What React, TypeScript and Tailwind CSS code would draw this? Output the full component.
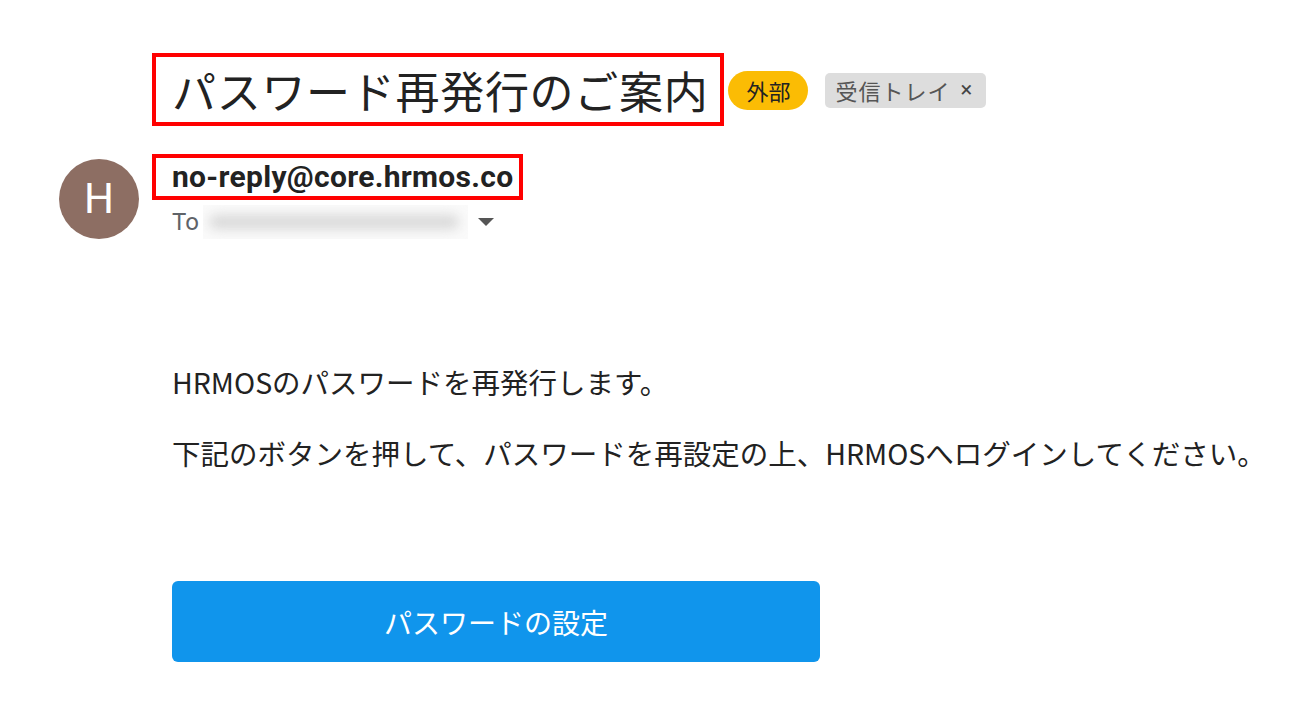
import React from "react";

export default function App() {
  const jp = { fontFamily: '"Noto Sans CJK JP", "Noto Sans", sans-serif' };
  const ro = { fontFamily: 'Roboto, "Noto Sans CJK JP", sans-serif' };
  return (
    <div className="w-[1316px] h-[720px] bg-white overflow-hidden relative">
      {/* Title row */}
      <div className="flex items-center pl-[152px] pt-[53px]">
        <div className="h-[73px] border-4 border-[#ff0000] flex items-center pl-[16px] pr-[12px]">
          <span className="text-[44px] leading-none text-[#222] tracking-[0.7px]" style={jp}>
            パスワード再発行のご案内
          </span>
        </div>
        <div className="ml-[4px] h-[39px] w-[80px] rounded-full bg-[#fbbc04] flex items-center justify-center mt-[1px]">
          <span className="text-[22px] leading-none text-[#222]" style={jp}>外部</span>
        </div>
        <div className="ml-[17px] h-[35px] rounded-[5px] bg-[#dddddd] flex items-center pl-[10px] pr-[14px] mt-[1px]">
          <span className="text-[22px] leading-none text-[#555] tracking-[1px]" style={jp}>受信トレイ</span>
          <span className="ml-[10px] text-[22px] leading-none text-[#444]" style={ro}>×</span>
        </div>
      </div>

      {/* Sender */}
      <div className="flex pl-[59px] mt-[28px]">
        <div className="w-[80px] h-[80px] rounded-full bg-[#8d6e63] flex items-center justify-center mt-[5px]">
          <span className="text-white text-[42px] leading-none" style={ro}>H</span>
        </div>
        <div className="ml-[13px] flex flex-col">
          <div className="h-[46px] border-4 border-[#ff0000] flex items-center pl-[16px] pr-[6px] self-start">
            <span className="text-[30px] font-bold text-[#222] leading-none tracking-[0.3px]" style={ro}>no-reply@core.hrmos.co</span>
          </div>
          <div className="flex items-center pl-[20px] h-[36px] mt-[4px]">
            <span className="text-[24px] text-[#5f6368] leading-none" style={ro}>To</span>
            <div className="ml-[4px] w-[265px] h-[34px] relative overflow-hidden bg-[#fafafa]">
              <div className="absolute left-[6px] top-[10px] w-[250px] h-[14px] rounded-full bg-[#d8d8d8] blur-[6px]" />
            </div>
            <svg className="ml-[10px]" width="16" height="9" viewBox="0 0 16 9">
              <path d="M0 0 H16 L8 8 Z" fill="#555" />
            </svg>
          </div>
        </div>
      </div>

      {/* Body */}
      <div className="pl-[172px] mt-[124px] text-[#222]" style={jp}>
        <p className="text-[28.5px] leading-[36px]">HRMOSのパスワードを再発行します。</p>
        <p className="text-[28.5px] leading-[36px] mt-[35px]">
          下記のボタンを押して、パスワードを再設定の上、HRMOSへログインしてください。
        </p>
        <div className="mt-[110px] w-[648px] h-[81px] rounded-[6px] bg-[#1095ec] flex items-center justify-center">
          <span className="text-white text-[28px] leading-none" style={jp}>パスワードの設定</span>
        </div>
      </div>
    </div>
  );
}
